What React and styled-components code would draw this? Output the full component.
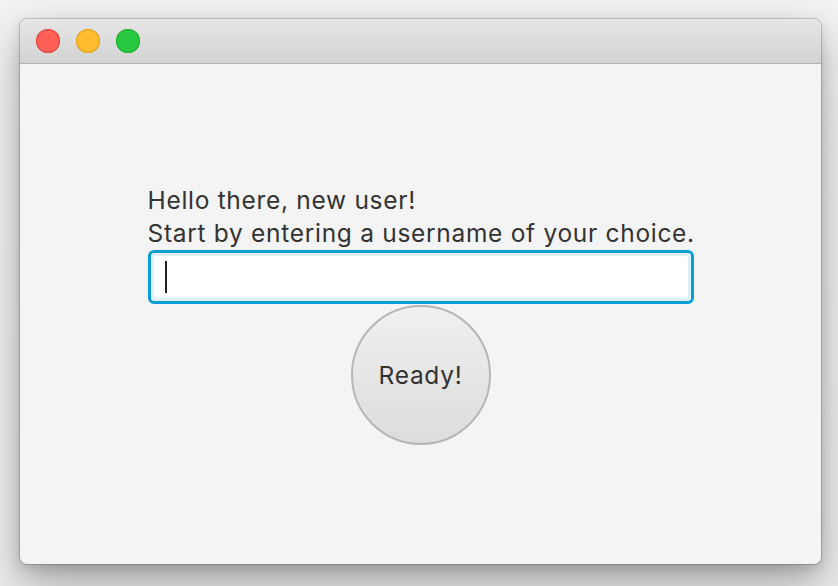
import React from 'react';
import styled, { createGlobalStyle } from 'styled-components';

const Global = createGlobalStyle`
  html, body {
    margin: 0;
    padding: 0;
  }
  body {
    width: 838px;
    height: 586px;
    overflow: hidden;
    background: #efefef;
    font-family: Inter, "Open Sans", "Liberation Sans", sans-serif;
  }
`;

const Desktop = styled.div`
  width: 838px;
  height: 586px;
  padding: 19px 0 0 20px;
  box-sizing: border-box;
  background: linear-gradient(180deg, #f2f2f2 0%, #ececec 100%);
`;

const Window = styled.div`
  width: 801px;
  height: 545px;
  border-radius: 7px;
  overflow: hidden;
  display: flex;
  flex-direction: column;
  background: #f4f4f4;
  box-shadow:
    0 0 0 1px rgba(0, 0, 0, 0.16),
    0 18px 40px rgba(0, 0, 0, 0.32),
    0 4px 12px rgba(0, 0, 0, 0.12);
`;

const TitleBar = styled.div`
  height: 45px;
  flex: none;
  display: flex;
  align-items: center;
  gap: 16px;
  padding-left: 16px;
  box-sizing: border-box;
  background: linear-gradient(180deg, #e6e6e6 0%, #d3d3d3 100%);
  border-bottom: 1px solid #b3b3b3;
`;

const Light = styled.span`
  width: 24px;
  height: 24px;
  border-radius: 50%;
  background: ${p => p.$fill};
  box-shadow: inset 0 0 0 1px ${p => p.$edge};
`;

const Content = styled.div`
  flex: 1;
  display: flex;
  flex-direction: column;
  align-items: center;
  justify-content: center;
  padding-top: 1px;
`;

const Form = styled.div`
  width: 546px;
  display: flex;
  flex-direction: column;
  align-items: center;
`;

const Label = styled.div`
  align-self: stretch;
  font-size: 24.5px;
  line-height: 33px;
  letter-spacing: 0.7px;
  color: #333;
  white-space: nowrap;
`;

const Field = styled.div`
  align-self: stretch;
  height: 54px;
  box-sizing: border-box;
  border: 3px solid #0a9ed7;
  border-radius: 6px;
  padding: 3px;
  background: #dff0f8;
  display: flex;
`;

const Inner = styled.div`
  flex: 1;
  background: #fff;
  border-radius: 3px;
  display: flex;
  align-items: center;
  padding-left: 11px;
`;

const Caret = styled.span`
  width: 2px;
  height: 32px;
  background: #222;
`;

const Button = styled.button`
  width: 140px;
  height: 140px;
  margin-top: 1px;
  border-radius: 50%;
  border: 2px solid #b6b6b6;
  background: linear-gradient(180deg, #f0f0f0 0%, #dcdcdc 100%);
  font-family: inherit;
  font-size: 24.5px;
  letter-spacing: 0.7px;
  color: #333;
  padding: 0;
  cursor: pointer;
`;

export default function App() {
  return (
    <>
      <Global />
      <Desktop>
        <Window>
          <TitleBar>
            <Light $fill="#fe5f57" $edge="#e0443e" />
            <Light $fill="#febc2e" $edge="#dea123" />
            <Light $fill="#28c840" $edge="#1aab29" />
          </TitleBar>
          <Content>
            <Form>
              <Label>Hello there, new user!</Label>
              <Label>Start by entering a username of your choice.</Label>
              <Field>
                <Inner>
                  <Caret />
                </Inner>
              </Field>
              <Button>Ready!</Button>
            </Form>
          </Content>
        </Window>
      </Desktop>
    </>
  );
}
